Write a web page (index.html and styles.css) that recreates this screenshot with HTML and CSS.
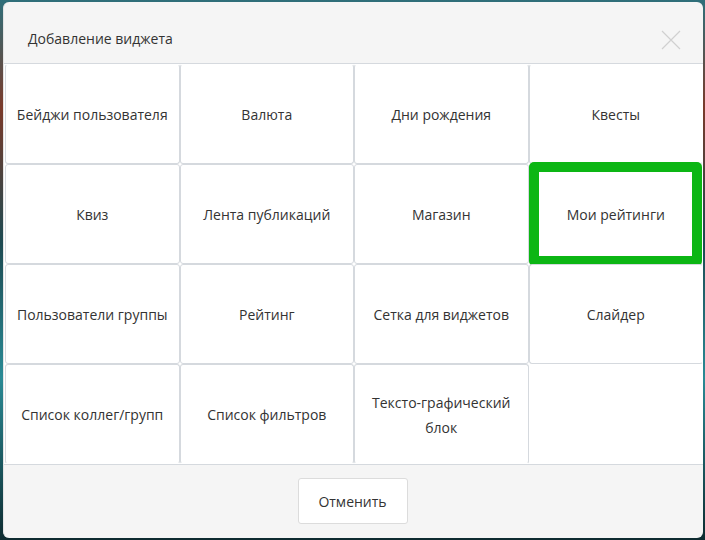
FILE: index.html
```html
<!DOCTYPE html>
<html lang="ru">
<head>
<meta charset="utf-8">
<link rel="stylesheet" href="styles.css">
</head>
<body>
<div class="backdrop">
  <div class="dialog">
    <div class="header">
      <span class="title">Добавление виджета</span>
      <svg class="close" width="20" height="20" viewBox="0 0 20 20"><path d="M1 1 L19 19 M19 1 L1 19" stroke="#d0d0d0" stroke-width="1.2" fill="none"/></svg>
    </div>
    <div class="grid">
      <div class="cell">Бейджи пользователя</div>
      <div class="cell">Валюта</div>
      <div class="cell">Дни рождения</div>
      <div class="cell">Квесты</div>
      <div class="cell">Квиз</div>
      <div class="cell">Лента публикаций</div>
      <div class="cell">Магазин</div>
      <div class="cell marked">Мои рейтинги</div>
      <div class="cell">Пользователи группы</div>
      <div class="cell">Рейтинг</div>
      <div class="cell">Сетка для виджетов</div>
      <div class="cell">Слайдер</div>
      <div class="cell">Список коллег/групп</div>
      <div class="cell">Список фильтров</div>
      <div class="cell">Тексто-графический блок</div>
      <div class="cell empty"></div>
    </div>
    <div class="footer">
      <button class="btn">Отменить</button>
    </div>
  </div>
</div>
</body>
</html>
```

FILE: styles.css
```css
html, body {
  margin: 0;
  padding: 0;
}
body {
  width: 705px;
  height: 540px;
  overflow: hidden;
  font-family: "Open Sans", "Noto Sans", sans-serif;
  background: linear-gradient(180deg, #2f6f7a 0%, #7a3a2a 20%, #1d4a52 45%, #2a8a95 70%, #0e2b30 100%);
}
.backdrop {
  padding: 2px 2px 2px 3px;
  height: 536px;
}
.dialog {
  width: 700px;
  height: 536px;
  background: #f5f5f5;
  border-radius: 6px;
  display: flex;
  flex-direction: column;
  overflow: hidden;
  box-sizing: border-box;
  border-left: 1px solid #e4e4e4;
}
.header {
  height: 61px;
  flex: none;
  display: flex;
  align-items: center;
  justify-content: space-between;
  padding: 0 22px 0 24px;
  box-sizing: border-box;
}
.title {
  font-size: 14px;
  color: #333;
  padding-top: 12px;
}
.close {
  margin-top: 14px;
}
.grid {
  flex: none;
  display: grid;
  grid-template-columns: repeat(4, 1fr);
  grid-template-rows: repeat(4, 100px);
  padding: 0 0 0 1px;
  background: #fff;
  border-top: 1px solid #d5d9de;
  border-bottom: 1px solid #d5d9de;
}
.cell {
  position: relative;
  display: flex;
  align-items: center;
  justify-content: center;
  text-align: center;
  padding: 1px 4px 0;
  font-size: 14px;
  line-height: 25px;
  color: #333;
  background: #fff;
  border: 1px solid #d5d9de;
  border-radius: 3px;
  box-sizing: border-box;
}
.cell:nth-child(-n+4) {
  border-top-color: transparent;
}
.cell:nth-child(4n) {
  border-right-color: transparent;
}
.cell:nth-child(n+13) {
  border-bottom-color: transparent;
}
.cell.empty {
  border-color: transparent;
}
.marked::after {
  content: "";
  position: absolute;
  left: -1px;
  top: -3px;
  right: 0;
  bottom: -3px;
  border: 10px solid #0cb614;
  border-radius: 5px;
}
.footer {
  flex: 1;
  display: flex;
  align-items: flex-start;
  justify-content: center;
  padding-top: 13px;
}
.btn {
  font-family: "Open Sans", "Noto Sans", sans-serif;
  font-size: 14px;
  color: #333;
  background: #fff;
  border: 1px solid #dcdcdc;
  border-radius: 3px;
  width: 110px;
  height: 46px;
  margin-left: -2px;
  cursor: pointer;
}
```
